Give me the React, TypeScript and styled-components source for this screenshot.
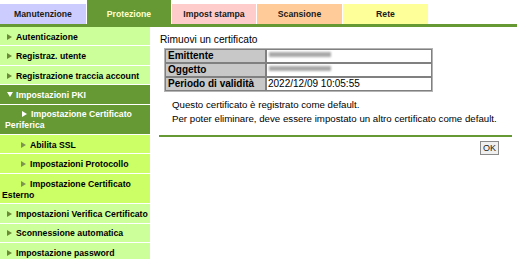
import React from 'react';
import styled, { createGlobalStyle } from 'styled-components';

const Global = createGlobalStyle`
  html, body { margin: 0; padding: 0; background: #fff; }
  body { font-family: "Liberation Sans", Arial, sans-serif; }
`;

const Page = styled.div`
  width: 517px;
  height: 259px;
  overflow: hidden;
  background: #fff;
`;

const TabBar = styled.div`
  display: flex;
  align-items: flex-end;
  gap: 1px;
  height: 24px;
`;

const Tab = styled.div<{ $bg: string; $active?: boolean; $w: number }>`
  box-sizing: border-box;
  width: ${(p) => p.$w}px;
  height: ${(p) => (p.$active ? 24 : 20)}px;
  padding-top: ${(p) => (p.$active ? 3 : 0)}px;
  background: ${(p) => p.$bg};
  color: ${(p) => (p.$active ? '#ffffcc' : '#1a1a1a')};
  font-weight: bold;
  font-size: 8.7px;
  display: flex;
  align-items: center;
  justify-content: center;
`;

const GreenBar = styled.div`
  height: 3px;
  background: #669933;
`;

const Body = styled.div`
  display: flex;
  align-items: flex-start;
`;

const Sidebar = styled.nav`
  width: 150px;
  flex: none;
  display: flex;
  flex-direction: column;
`;

type Kind = 'top' | 'open' | 'sub' | 'subsub';

const bgFor = (k: Kind) =>
  k === 'top' ? '#ccff99' : k === 'subsub' ? '#ccff66' : '#669933';

const Item = styled.div<{ $kind: Kind }>`
  background: ${(p) => bgFor(p.$kind)};
  color: ${(p) => (p.$kind === 'open' || p.$kind === 'sub' ? '#ffffff' : '#000')};
  font-size: 8.7px;
  font-weight: bold;
  line-height: 11px;
  padding: 4.8px 0 2.6px ${(p) => (p.$kind === 'sub' ? 5 : p.$kind === 'subsub' ? 2 : 7)}px;
  text-indent: ${(p) => (p.$kind === 'sub' ? 17 : p.$kind === 'subsub' ? 19 : 0)}px;
  border-bottom: 1px solid #ffffff;
`;

const Arrow = styled.span<{ $color: string }>`
  display: inline-block;
  width: 0;
  height: 0;
  border-left: 5px solid ${(p) => p.$color};
  border-top: 3px solid transparent;
  border-bottom: 3px solid transparent;
  margin-right: 4px;
  vertical-align: 0px;
  text-indent: 0;
`;

const Down = styled.span`
  display: inline-block;
  width: 0;
  height: 0;
  border-top: 5px solid #ffffff;
  border-left: 3px solid transparent;
  border-right: 3px solid transparent;
  margin-right: 3px;
  vertical-align: 1px;
`;

const Main = styled.main`
  flex: 1;
  padding: 6px 5px 0 9px;
  display: flex;
  flex-direction: column;
`;

const Title = styled.h1`
  margin: 0 0 1px 1px;
  font-size: 10.2px;
  font-weight: normal;
  line-height: 14px;
  color: #000;
`;

const InfoTable = styled.table`
  border-collapse: separate;
  border-spacing: 0;
  border: 1px solid #b4b4b4;
  margin-left: 5px;
  width: 269px;
  font-size: 10px;
`;

const LabelCell = styled.th`
  width: 95px;
  background: #c8c8c8;
  border: 1px solid #808080;
  padding: 0 2px;
  text-align: left;
  font-weight: bold;
  line-height: 12px;
  color: #000;
  white-space: nowrap;
`;

const ValueCell = styled.td`
  background: #fff;
  border: 1px solid #808080;
  padding: 0 1px;
  line-height: 12px;
  color: #000;
  white-space: nowrap;
`;

const Redacted = styled.span`
  display: inline-block;
  width: 62px;
  height: 5px;
  margin-left: 1px;
  vertical-align: 2px;
  background: #a9a9a9;
  filter: blur(1.3px);
`;

const Messages = styled.div`
  margin: 6px 0 0 13px;
  font-size: 9.7px;
  line-height: 14px;
  color: #000;
`;

const Divider = styled.div`
  margin-top: 9px;
  height: 2px;
  background: #669933;
`;

const ButtonRow = styled.div`
  display: flex;
  justify-content: flex-end;
  padding: 4px 13px 0 0;
`;

const OkButton = styled.button`
  box-sizing: border-box;
  width: 19px;
  height: 14px;
  padding: 0;
  margin: 0;
  font-family: "Liberation Sans", Arial, sans-serif;
  font-size: 9px;
  color: #222;
  background: #efefef;
  border: 1px solid #8a8a8a;
  border-radius: 0;
`;

const tabs = [
  { label: 'Manutenzione', bg: '#ccccff', w: 86 },
  { label: 'Protezione', bg: '#669933', w: 84, active: true },
  { label: 'Impost stampa', bg: '#ffcccc', w: 84 },
  { label: 'Scansione', bg: '#ffcc99', w: 85 },
  { label: 'Rete', bg: '#ffff99', w: 85 },
];

const menu: { label: string; kind: Kind }[] = [
  { label: 'Autenticazione', kind: 'top' },
  { label: 'Registraz. utente', kind: 'top' },
  { label: 'Registrazione traccia account', kind: 'top' },
  { label: 'Impostazioni PKI', kind: 'open' },
  { label: 'Impostazione Certificato Periferica', kind: 'sub' },
  { label: 'Abilita SSL', kind: 'subsub' },
  { label: 'Impostazioni Protocollo', kind: 'subsub' },
  { label: 'Impostazione Certificato Esterno', kind: 'subsub' },
  { label: 'Impostazioni Verifica Certificato', kind: 'top' },
  { label: 'Sconnessione automatica', kind: 'top' },
  { label: 'Impostazione password', kind: 'top' },
];

const arrowColor = (k: Kind) =>
  k === 'sub' ? '#ffffff' : k === 'subsub' ? '#7f9450' : '#6a8a36';

export default function App() {
  return (
    <Page>
      <Global />
      <TabBar>
        {tabs.map((t) => (
          <Tab key={t.label} $bg={t.bg} $w={t.w} $active={t.active}>
            {t.label}
          </Tab>
        ))}
      </TabBar>
      <GreenBar />
      <Body>
        <Sidebar>
          {menu.map((m) => (
            <Item key={m.label} $kind={m.kind}>
              {m.kind === 'open' ? <Down /> : <Arrow $color={arrowColor(m.kind)} />}
              {m.label}
            </Item>
          ))}
        </Sidebar>
        <Main>
          <Title>Rimuovi un certificato</Title>
          <InfoTable>
            <tbody>
              <tr>
                <LabelCell>Emittente</LabelCell>
                <ValueCell>
                  <Redacted />
                </ValueCell>
              </tr>
              <tr>
                <LabelCell>Oggetto</LabelCell>
                <ValueCell>
                  <Redacted />
                </ValueCell>
              </tr>
              <tr>
                <LabelCell>Periodo di validità</LabelCell>
                <ValueCell>2022/12/09 10:05:55</ValueCell>
              </tr>
            </tbody>
          </InfoTable>
          <Messages>
            <div>Questo certificato è registrato come default.</div>
            <div>Per poter eliminare, deve essere impostato un altro certificato come default.</div>
          </Messages>
          <Divider />
          <ButtonRow>
            <OkButton>OK</OkButton>
          </ButtonRow>
        </Main>
      </Body>
    </Page>
  );
}
